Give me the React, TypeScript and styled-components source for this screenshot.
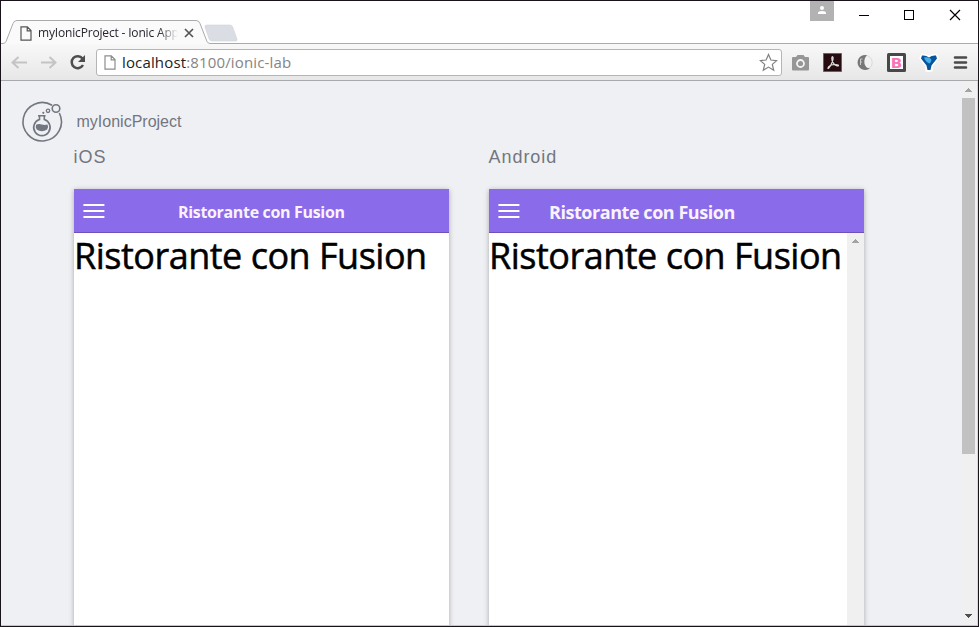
import React from "react";
import styled, { createGlobalStyle } from "styled-components";

const Global = createGlobalStyle`
  html, body { margin: 0; padding: 0; overflow: hidden; }
  * { box-sizing: border-box; }
`;

const Window = styled.div`
  width: 979px;
  height: 627px;
  border: 1px solid #171318;
  background: #fff;
  display: flex;
  flex-direction: column;
  overflow: hidden;
`;

const TitleBar = styled.div`
  height: 43px;
  flex: none;
  display: flex;
  align-items: flex-start;
  position: relative;
`;

const TabArt = styled.svg`
  position: absolute;
  left: 0;
  top: 0;
`;

const TabContent = styled.div`
  position: relative;
  display: flex;
  align-items: center;
  width: 240px;
  height: 26px;
  margin-top: 19px;
  padding-left: 19px;
`;

const TabTitle = styled.span`
  font: 12px/16px "Open Sans", sans-serif;
  color: #29252f;
  width: 140px;
  margin-left: 6px;
  white-space: nowrap;
  letter-spacing: -0.17px;
  mask-image: linear-gradient(90deg, #000 86%, transparent 100%);
`;

const CloseTab = styled.svg`
  margin-left: 6px;
`;

const WindowControls = styled.div`
  margin-left: auto;
  display: flex;
`;

const Toolbar = styled.div`
  height: 37px;
  flex: none;
  display: flex;
  align-items: center;
  background: linear-gradient(#f8f8f8, #e7e7e7);
  border-bottom: 1px solid #a9a9ab;
`;

const NavIcons = styled.svg`
  flex: none;
`;

const AddressBar = styled.div`
  width: 686px;
  height: 27px;
  border: 1px solid #b5b5b5;
  border-radius: 3px;
  background: #fff;
  display: flex;
  align-items: center;
  padding: 0 3px 0 7px;
`;

const Url = styled.span`
  font: 15px/20px "Open Sans", sans-serif;
  color: #222;
  margin-left: 6px;
  flex: 1;
  white-space: nowrap;
  letter-spacing: 0.15px;
`;

const UrlRest = styled.span`
  color: #858585;
`;

const Page = styled.div`
  flex: 1;
  min-height: 0;
  display: flex;
  background: #eff0f4;
  border-bottom: 1px solid #c5c5c5;
  border-right: 1px solid #d8d8d8;
`;

const Lab = styled.main`
  flex: 1;
  min-width: 0;
  overflow: hidden;
`;

const LabHeader = styled.header`
  display: flex;
  align-items: center;
  height: 61px;
  padding: 20px 0 0 21px;
  font: 16px/20px "Liberation Sans", Arial, sans-serif;
  color: #727680;
`;

const ProjectName = styled.span`
  margin-left: 13.5px;
`;

const Devices = styled.div`
  display: flex;
  gap: 40px;
  padding-left: 73px;
`;

const Device = styled.section`
  width: 375px;
`;

const Platform = styled.h2`
  margin: 5px 0 21px -0.5px;
  height: 21px;
  font: 18px/21px "Liberation Sans", Arial, sans-serif;
  letter-spacing: 0.95px;
  color: #727680;
`;

const Phone = styled.div`
  height: 500px;
  background: #fff;
  box-shadow: 0 1px 5px rgba(0, 0, 0, 0.3);
`;

const AppBar = styled.div`
  height: 44px;
  background: #8a6be9;
  border-bottom: 1px solid #6e50bd;
  display: flex;
  align-items: center;
`;

const BarTitle = styled.span<{ $centered?: boolean }>`
  font: 700 ${(p) => (p.$centered ? 16 : 18)}px/24px "Open Sans", sans-serif;
  color: #faf3ff;
  margin-top: 2px;
  margin-left: ${(p) => (p.$centered ? 73 : 29)}px;
  letter-spacing: ${(p) => (p.$centered ? "-0.33px" : "-0.45px")};
  white-space: nowrap;
`;

const Body = styled.div`
  display: flex;
  justify-content: space-between;
  height: 456px;
`;

const Heading = styled.h1`
  margin: -1px 0 0;
  font: 400 36px/48px "Open Sans", sans-serif;
  letter-spacing: -0.5px;
  -webkit-text-stroke: 0.5px #000;
  color: #000;
  white-space: nowrap;
`;

const ScrollTrack = styled.div<{ $width: number }>`
  width: ${(p) => p.$width}px;
  flex: none;
  display: flex;
  flex-direction: column;
  align-items: center;
  background: #f0f0f0;
`;

const ScrollThumb = styled.div`
  width: 13px;
  height: 356px;
  background: #c1c1c1;
  margin: 0 1px auto 0;
`;

const PageTrack = styled(ScrollTrack)`
  padding-right: 1px;
`;

const Arrow = ({ down = false, raised = false }: { down?: boolean; raised?: boolean }) => (
  <svg width="17" height="17" viewBox={raised ? "0 1 17 17" : "0 0 17 17"} shapeRendering="crispEdges">
    <path d={down ? "M5 6h7v1h-1v1h-1v1H9v1H8V9H7V8H6V7H5z" : "M5 11V10h1V9h1V8h1V7h1v1h1v1h1v1h1v1z"} fill={down ? "#505050" : "#a3a3a3"} />
  </svg>
);

const PageIcon = ({ color }: { color: string }) => (
  <svg width="12" height="15" viewBox="0 0 12 15" fill="none" stroke={color} strokeWidth="1.2">
    <path d="M1 .8h6.3L11 4.6v9.6H1zM7.2.8v4H11" />
  </svg>
);

const MenuIcon = () => (
  <svg width="31" height="44" stroke="#fff" strokeWidth="2">
    <path d="M9.4 16h21M9.4 22h21M9.4 28h21" />
  </svg>
);

const FlaskLogo = () => (
  <svg width="41" height="41" viewBox="0.5 -1 41 41" fill="none" stroke="#727680" overflow="visible">
    <path d="M30.6 3.3A19.2 19.2 0 1 0 37.8 11" strokeWidth="1.6" />
    <circle cx="34.5" cy="6.5" r="3.8" strokeWidth="1.6" />
    <circle cx="26.5" cy="8.8" r="1.7" strokeWidth="1.3" />
    <circle cx="21.8" cy="10.8" r="1.1" fill="#727680" stroke="none" />
    <path d="M16.5 13.8h7.6M18 14v3.6a8.2 8.2 0 1 0 4.8 0V14" strokeWidth="1.6" />
    <path d="M14.8 22.5q3-.8 5.600 0t5.600 0q1.400 2.500-.4 5-5.200 3.600-10.400 0-1.800-2.500-.4-5z" fill="#727680" stroke="none" />
  </svg>
);

const ExtensionIcons = () => (
  <NavIcons width="196" height="36" viewBox="782 44 196 36">
    <path d="M793 57h3l1.500-2h6l1.500 2h3q1 0 1 1v11.500q0 1-1 1h-15q-1 0-1-1V58q0-1 1-1z" fill="#969696" />
    <circle cx="800.5" cy="63.5" r="3.500" fill="none" stroke="#f4f4f4" strokeWidth="1.800" />
    <path d="M823.500 53.500h18v18h-18z" fill="#260b10" stroke="#d43527" />
    <path d="M828 68c.5-2 4-3.500 8-3.500 3.500 0 3 2 .5 1.200-2.500-.8-4.700-4.200-4.700-7.200s1.700-2 1.300.5c-.5 3-3 8-4.300 9-.6.500-1 .500-.8 0z" fill="none" stroke="#ddd" strokeWidth="1.200" />
    <circle cx="865" cy="62.500" r="7.200" fill="#f1f1f1" stroke="#cfcfcf" strokeWidth=".7" />
    <path d="M867 55.200a7.500 7.500 0 1 0 3 13q-4 .3-5.500-4.500-1-5 2.500-8.500z" fill="#777" />
    <path d="M862.500 59h-2v6M860.500 62h1.500" stroke="#ccc" fill="none" />
    <rect x="887" y="53" width="19" height="19" rx="1.500" fill="#484848" />
    <path d="M890 56h13v13h-13z" fill="#fff" />
    <text x="890.800" y="68" textLength="11.500" lengthAdjust="spacingAndGlyphs" fontFamily="DejaVu Sans" fontSize="14.500" fontWeight="900" fill="#f775b5">B</text>
    <path d="M922 55q4 0 7 2 3-2 7-2l1.500 3-6 8v4.500h-5V66l-6-8z" fill="#fff" stroke="#fff" strokeWidth="2.500" strokeLinejoin="round" />
    <path d="M922 55.500q4-.5 7 2 3-2.500 7-2l1 3-5.500 7-1 4.500h-3l-1-4.500-5.500-7z" fill="#07549b" />
    <path d="M924 57.500q5-1 7 1.500 1 2-1.500 4.500-3.500-1-5.500-6z" fill="#44afe8" />
    <path d="M955 57.500h11M955 62.500h11M955 67.500h11" stroke="#4a4a4a" strokeWidth="2.600" strokeLinecap="round" />
  </NavIcons>
);

export default function App() {
  return (
    <>
      <Global />
      <Window>
        <TitleBar>
          <TabArt width="977" height="43" viewBox="1 1 977 43">
            <path d="M1 43.5h2q2 0 3-2l7-18q1-3 4-3h179q3 0 4 3l7 18q1 2 3 2h768V45H1z" fill="#fafafa" />
            <path d="M1 43.5h2q2 0 3-2l7-18q1-3 4-3h179q3 0 4 3l7 18q1 2 3 2h768" fill="none" stroke="#aaa" />
            <path d="M207 25h23q2 0 2.700 2l4.300 12q.6 2-2 2h-23q-2 0-3-2l-4-12q-.5-2 2-2z" fill="#dadde4" stroke="#d0d3d9" strokeWidth=".6" />
          </TabArt>
          <TabContent>
            <PageIcon color="#555" />
            <TabTitle>myIonicProject - Ionic App</TabTitle>
            <CloseTab width="10" height="10" stroke="#555" strokeWidth="1.7">
              <path d="M1 1l8 8M9 1l-8 8" />
            </CloseTab>
          </TabContent>
          <WindowControls>
            <svg width="168" height="30" viewBox="810 1 168 30" fill="none" stroke="#000">
              <path d="M810 1h24v20h-24z" fill="#b2b2b2" stroke="none" />
              <circle cx="822" cy="8" r="2" fill="#fff" stroke="none" />
              <path d="M818 14v-1q0-2 4-2t4 2v1z" fill="#fff" stroke="none" />
              <path d="M859 15.500h10M904.500 10.500h9v9h-9z" shapeRendering="crispEdges" />
              <path d="M950 10l10 10M960 10l-10 10" strokeWidth="1.200" />
            </svg>
          </WindowControls>
        </TitleBar>
        <Toolbar>
          <NavIcons width="95" height="36" viewBox="1 44 95 36" fill="none">
            <path d="M13 62.500h14M18.500 57l-6 5.500 6 5.500M41 62.500h14M49.500 57l6 5.500-6 5.500" stroke="#c4c4c4" strokeWidth="2" />
            <path d="M82.500 58.500a6 6 0 1 0 .5 6.500" stroke="#4d4d4d" strokeWidth="2.500" />
            <path d="M85 55v7h-7z" fill="#4d4d4d" />
          </NavIcons>
          <AddressBar>
            <PageIcon color="#8d8d8d" />
            <Url>localhost<UrlRest>:8100/ionic-lab</UrlRest></Url>
            <svg width="19" height="19" viewBox="0 0 19 19" fill="#fff" stroke="#808080" strokeWidth="1.200">
              <path d="M9.500 1.500l2.400 5.500 5.800.6-4.400 3.800 1.400 5.900-5.200-3.200-5.200 3.200 1.400-5.900L1.300 7.600 7.100 7z" />
            </svg>
          </AddressBar>
          <ExtensionIcons />
        </Toolbar>
        <Page>
          <Lab>
            <LabHeader>
              <FlaskLogo />
              <ProjectName>myIonicProject</ProjectName>
            </LabHeader>
            <Devices>
              <Device>
                <Platform>iOS</Platform>
                <Phone>
                  <AppBar><MenuIcon /><BarTitle $centered>Ristorante con Fusion</BarTitle></AppBar>
                  <Body><Heading>Ristorante con Fusion</Heading></Body>
                </Phone>
              </Device>
              <Device>
                <Platform>Android</Platform>
                <Phone>
                  <AppBar><MenuIcon /><BarTitle>Ristorante con Fusion</BarTitle></AppBar>
                  <Body>
                    <Heading>Ristorante con Fusion</Heading>
                    <ScrollTrack $width={17}><Arrow raised /></ScrollTrack>
                  </Body>
                </Phone>
              </Device>
            </Devices>
          </Lab>
          <PageTrack $width={16}>
            <Arrow />
            <ScrollThumb />
            <Arrow down />
          </PageTrack>
        </Page>
      </Window>
    </>
  );
}
